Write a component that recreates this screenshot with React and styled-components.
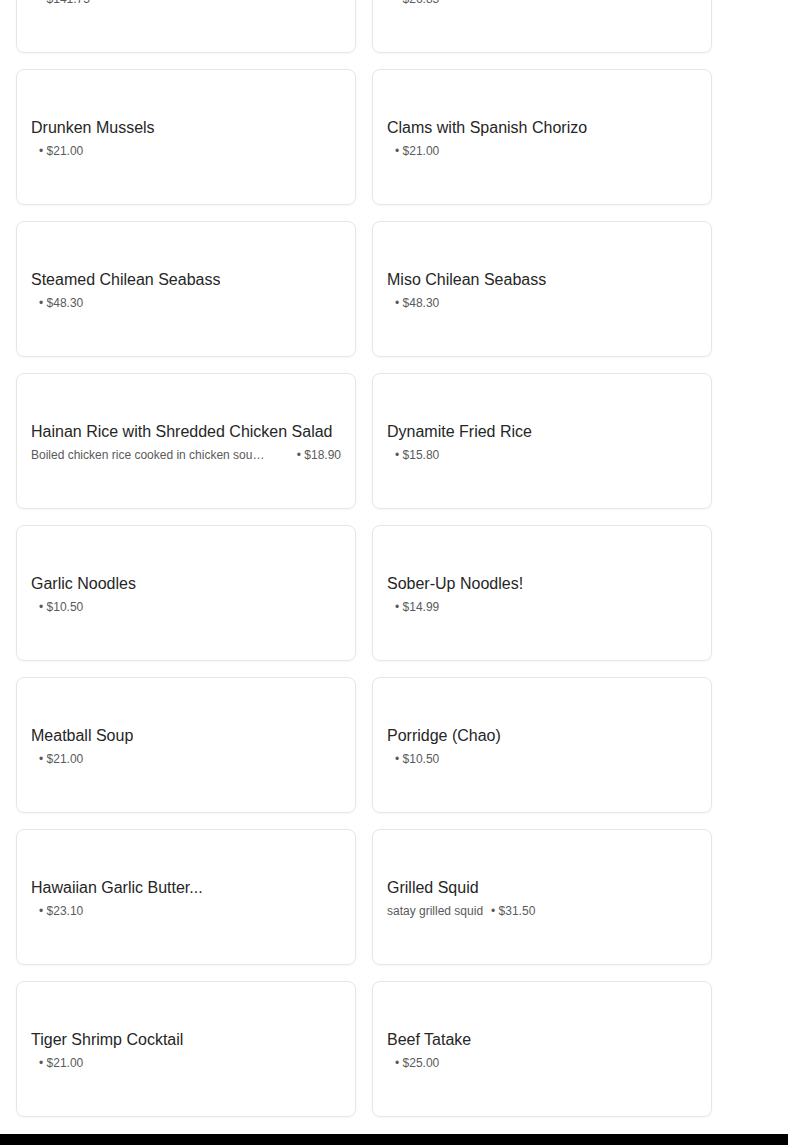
import React from 'react'
import styled, {createGlobalStyle} from 'styled-components'

const items = [
    {title: 'Seafood Platter', price: '$141.75'},
    {title: 'Salt & Pepper Shrimp', price: '$26.85'},
    {title: 'Drunken Mussels', price: '$21.00'},
    {title: 'Clams with Spanish Chorizo', price: '$21.00'},
    {title: 'Steamed Chilean Seabass', price: '$48.30'},
    {title: 'Miso Chilean Seabass', price: '$48.30'},
    {title: 'Hainan Rice with Shredded Chicken Salad', desc: 'Boiled chicken rice cooked in chicken soup, served with shredded chicken salad', price: '$18.90'},
    {title: 'Dynamite Fried Rice', price: '$15.80'},
    {title: 'Garlic Noodles', price: '$10.50'},
    {title: 'Sober-Up Noodles!', price: '$14.99'},
    {title: 'Meatball Soup', price: '$21.00'},
    {title: 'Porridge (Chao)', price: '$10.50'},
    {title: 'Hawaiian Garlic Butter...', price: '$23.10'},
    {title: 'Grilled Squid', desc: 'satay grilled squid', price: '$31.50'},
    {title: 'Tiger Shrimp Cocktail', price: '$21.00'},
    {title: 'Beef Tatake', price: '$25.00'},
]

const GlobalStyle = createGlobalStyle`
    html, body {
        margin: 0;
        padding: 0;
        background: #ffffff;
        overflow: hidden;
    }
    body {
        font-family: "Liberation Sans", Arial, sans-serif;
        -webkit-font-smoothing: antialiased;
    }
`

const App = () => {
    return (
        <Page>
            <GlobalStyle/>
            <Menu>
                {items.map((item) => {
                    // long descriptions get clipped and push the price to the right edge
                    const long = item.desc && item.desc.length > 40
                    return (
                        <Card key={item.title}>
                            <Title>{item.title}</Title>
                            <Meta $full={long}>
                                {item.desc && <Desc>{item.desc}</Desc>}
                                <Price>{`• ${item.price}`}</Price>
                            </Meta>
                        </Card>
                    )
                })}
            </Menu>
            <Footer/>
        </Page>
    )
}

const Page = styled.div`
    margin-top: -83px;
`

const Menu = styled.div`
    display: grid;
    grid-template-columns: 340px 340px;
    grid-auto-rows: 136px;
    gap: 16px;
    padding: 0 16px 17px;
`

const Card = styled.article`
    box-sizing: border-box;
    border: 1px solid #e6e6e6;
    border-radius: 8px;
    box-shadow: 0 1px 3px rgba(0, 0, 0, 0.04);
    padding: 4px 14px 0;
    display: flex;
    flex-direction: column;
    justify-content: center;
    align-items: flex-start;
    min-width: 0;
`

const Title = styled.h3`
    margin: 0;
    max-width: 100%;
    font-size: 16px;
    font-weight: 400;
    line-height: 22px;
    color: #262626;
    white-space: nowrap;
    overflow: hidden;
    text-overflow: ellipsis;
`

const Meta = styled.div`
    display: flex;
    align-items: center;
    justify-content: ${(p) => (p.$full ? 'space-between' : 'flex-start')};
    width: ${(p) => (p.$full ? '100%' : 'auto')};
    max-width: 100%;
    margin-top: 2px;
    font-size: 12px;
    line-height: 20px;
    color: #5a5a5a;
    min-width: 0;
`

const Desc = styled.span`
    flex: 0 1 auto;
    max-width: 240px;
    min-width: 0;
    white-space: nowrap;
    overflow: hidden;
    text-overflow: ellipsis;
`

const Price = styled.span`
    flex-shrink: 0;
    padding-left: 8px;
    white-space: nowrap;
`

const Footer = styled.footer`
    height: 200px;
    background: #000000;
`

export default App
